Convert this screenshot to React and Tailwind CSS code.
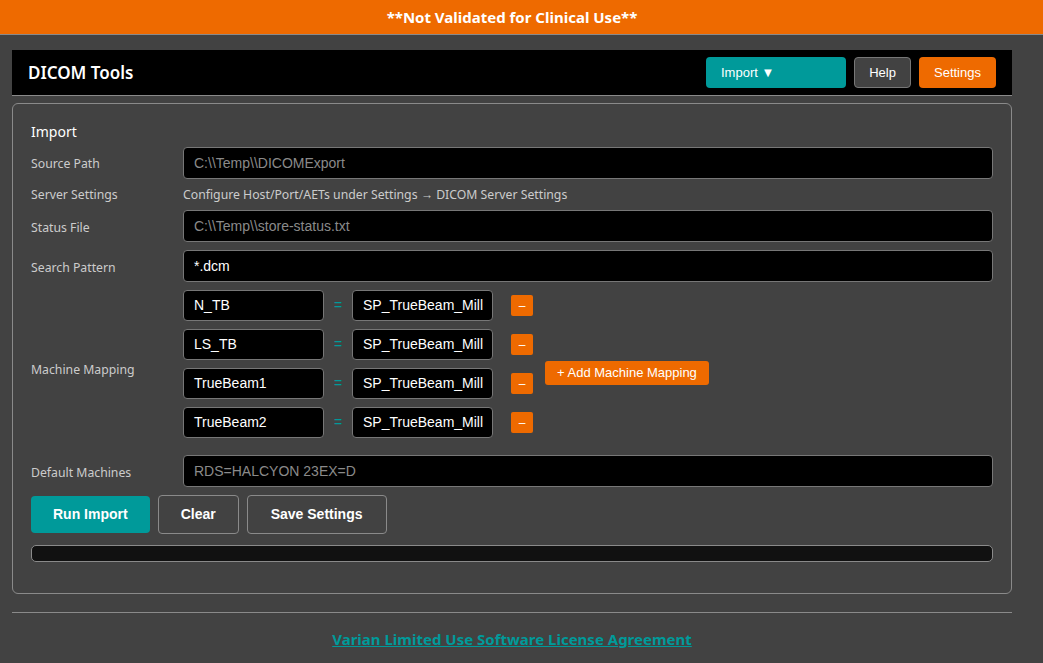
import React from "react";

const seg = { fontFamily: '"Noto Sans", "Open Sans", sans-serif' };
const arial = { fontFamily: '"Liberation Sans", Arial, sans-serif' };

function Label({ children, className = "" }) {
  return (
    <div className={"text-[12.25px] text-[#cccccc] " + className} style={seg}>
      {children}
    </div>
  );
}

function TextInput({ value, placeholder, h = "h-[32px]", className = "" }) {
  return (
    <div
      className={
        "flex items-center rounded-[4px] border border-[#777777] bg-black px-[10px] text-[14px] " +
        h +
        " " +
        (value ? "text-white " : "text-[#8a8a8a] ") +
        className
      }
      style={arial}
    >
      {value || placeholder}
    </div>
  );
}

const mappings = [
  ["N_TB", "SP_TrueBeam_Mill"],
  ["LS_TB", "SP_TrueBeam_Mill"],
  ["TrueBeam1", "SP_TrueBeam_Mill"],
  ["TrueBeam2", "SP_TrueBeam_Mill"],
];

export default function App() {
  return (
    <div className="min-h-[663px] w-full bg-[#424242]">
      <div className="flex h-[35px] items-center border-b border-[#8a8a8a] bg-[#ee6a00]">
        <div className="w-[1024px] text-center text-[15px] font-bold text-white" style={seg}>
          **Not Validated for Clinical Use**
        </div>
      </div>

      <div className="ml-3 w-[1000px] pt-[15px]">
        <div className="flex h-[46px] items-center justify-between border-b border-[#8a8a8a] bg-black pl-[16px] pr-[16px]">
          <div className="text-[17px] font-semibold text-white" style={seg}>
            DICOM Tools
          </div>
          <div className="flex items-center gap-[8px]" style={arial}>
            <button className="h-[31px] w-[140px] rounded-[4px] bg-[#009a9a] px-[15px] text-left text-[13px] text-white">
              Import ▼
            </button>
            <button className="h-[31px] w-[57px] rounded-[4px] border border-[#777777] bg-[#424242] text-[13px] text-white">
              Help
            </button>
            <button className="h-[31px] w-[77px] rounded-[4px] bg-[#ee6a00] text-[13px] text-white">
              Settings
            </button>
          </div>
        </div>

        <div className="mt-[7px] rounded-[6px] border border-[#8a8a8a] px-[18px] pb-[31px] pt-[17px]">
          <div className="text-[14px] text-white" style={seg}>
            Import
          </div>

          <div className="mt-[5px] grid grid-cols-[152px_1fr] items-center">
            <Label className="mt-[3px]">Source Path</Label>
            <TextInput placeholder="C:\\Temp\\DICOMExport" />
          </div>

          <div className="mt-[7px] grid grid-cols-[152px_1fr] items-center">
            <Label>Server Settings</Label>
            <div className="text-[12.25px] text-[#cccccc]" style={seg}>
              Configure Host/Port/AETs under Settings → DICOM Server Settings
            </div>
          </div>

          <div className="mt-[6px] grid grid-cols-[152px_1fr] items-center">
            <Label className="mt-[3px]">Status File</Label>
            <TextInput placeholder="C:\\Temp\\store-status.txt" />
          </div>

          <div className="mt-[8px] grid grid-cols-[152px_1fr] items-center">
            <Label className="mt-[3px]">Search Pattern</Label>
            <TextInput value="*.dcm" />
          </div>

          <div className="mt-[8px] grid grid-cols-[152px_1fr] items-center">
            <Label className="mt-[12px]">Machine Mapping</Label>
            <div className="flex items-center">
              <div className="flex flex-col gap-[8px]">
                {mappings.map(([a, b], i) => (
                  <div key={i} className="flex items-center">
                    <TextInput value={a} h="h-[31px]" className="w-[141px]" />
                    <div className="flex w-[28px] justify-center text-[14px] text-[#009a9a]" style={arial}>
                      =
                    </div>
                    <TextInput value={b} h="h-[31px]" className="w-[141px]" />
                    <button
                      className="ml-[18px] flex h-[21px] w-[22px] items-center justify-center rounded-[2px] bg-[#ee6a00] text-[12px] leading-none text-white"
                      style={arial}
                    >
                      –
                    </button>
                  </div>
                ))}
              </div>
              <button
                className="ml-[12px] mt-[17px] h-[24px] rounded-[3px] bg-[#ee6a00] px-[12px] text-[13px] text-white"
                style={arial}
              >
                + Add Machine Mapping
              </button>
            </div>
          </div>

          <div className="mt-[17px] grid grid-cols-[152px_1fr] items-center">
            <Label className="mt-[3px]">Default Machines</Label>
            <TextInput placeholder="RDS=HALCYON 23EX=D" />
          </div>

          <div className="mt-[8px] flex items-center gap-[8px]" style={arial}>
            <button className="h-[37px] rounded-[4px] bg-[#009a9a] px-[22px] text-[14px] font-bold text-white">
              Run Import
            </button>
            <button className="h-[39px] rounded-[4px] border border-[#8a8a8a] px-[22px] text-[14px] font-bold text-white">
              Clear
            </button>
            <button className="h-[39px] rounded-[4px] border border-[#8a8a8a] px-[23px] text-[14px] font-bold text-white">
              Save Settings
            </button>
          </div>

          <div className="mt-[11px] h-[17px] rounded-[5px] border border-[#8a8a8a] bg-[#111111]" />
        </div>

        <div className="mt-[18px] border-t border-[#8a8a8a]" />

        <div className="mt-[14px] text-center">
          <a className="text-[15px] font-bold text-[#009a9a] underline" style={seg} href="#">
            Varian Limited Use Software License Agreement
          </a>
        </div>
      </div>
    </div>
  );
}
